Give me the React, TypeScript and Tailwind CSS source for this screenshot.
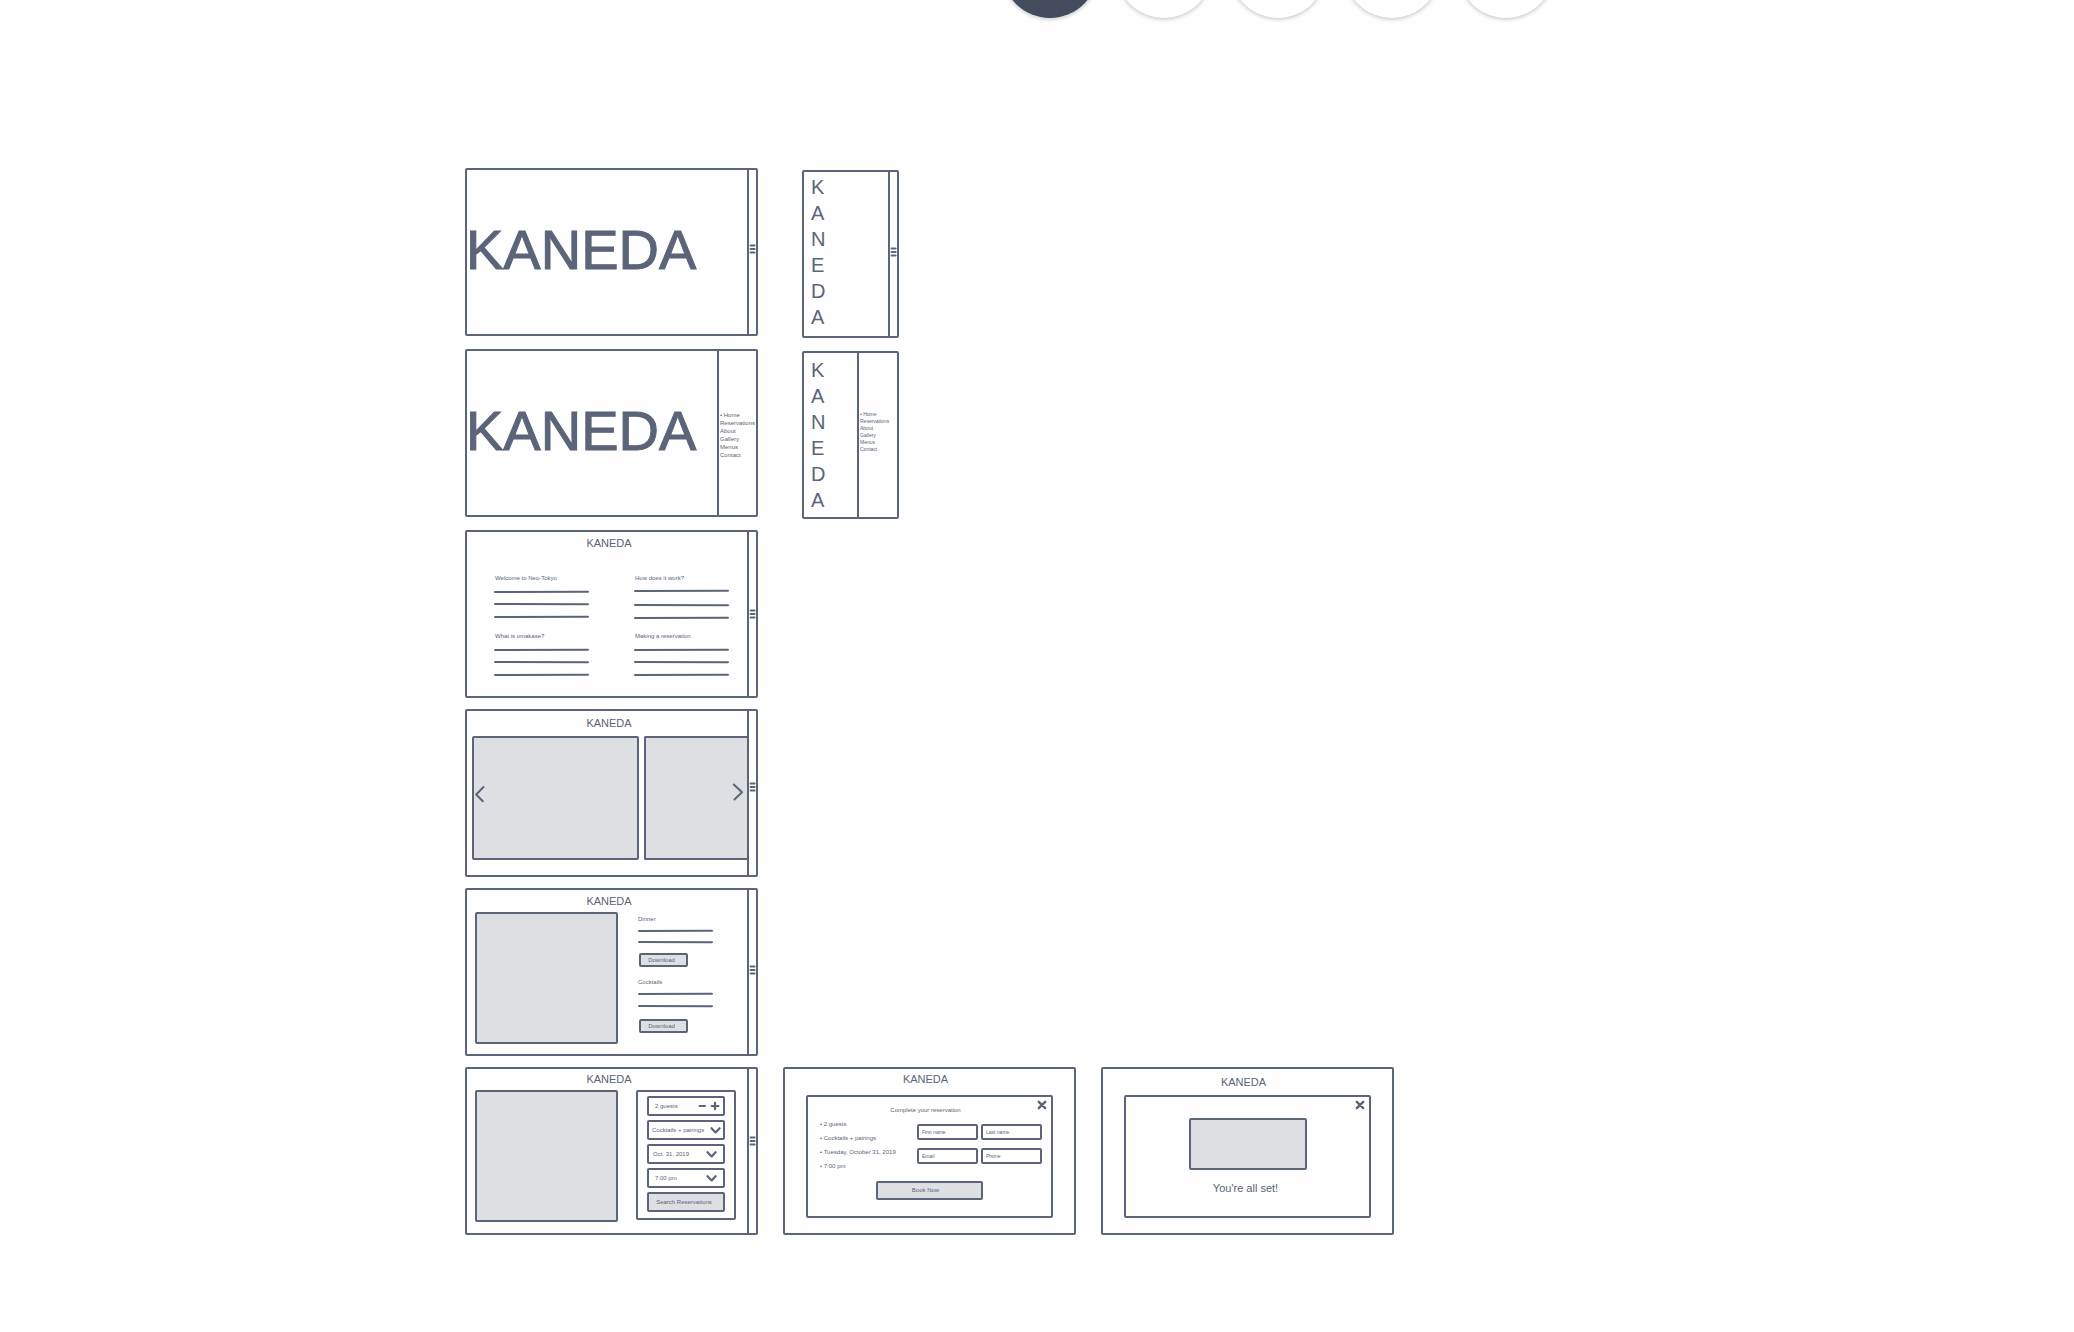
import React from 'react';
import { clsx } from 'clsx';

const menu = ['• Home', 'Reservations', 'About', 'Gallery', 'Menus', 'Contact'];

const steps = [
    { label: 'Step 1', active: true },
    { label: 'Step 2', active: false },
    { label: 'Step 3', active: false },
    { label: 'Step 4', active: false },
    { label: 'Step 5', active: false },
];

const articles = [
    { title: 'Welcome to Neo-Tokyo', lines: [9, 21, 34] },
    { title: 'How does it work?', lines: [8, 22, 35] },
    { title: 'What is omakase?', lines: [9, 21, 34] },
    { title: 'Making a reservation', lines: [9, 21, 34] },
];

const summary = ['2 guests', 'Cocktails + pairings', 'Tuesday, October 31, 2019', '7:00 pm'];

const Screen = ({ className, children }: { className?: string; children: React.ReactNode }) => (
    <section className={clsx('flex h-[168px] shrink-0 rounded-[2px] border-2 border-[#5b6478]', className ?? 'w-[293px]')}>
        {children}
    </section>
);

const Hero = ({ className }: { className: string }) => (
    <h1 className={clsx('-ml-px flex flex-1 items-center text-[56px] leading-none [-webkit-text-stroke:1px_#5b6478]', className)}>
        KANEDA
    </h1>
);

const Title = ({ className }: { className: string }) => (
    <h2 className={clsx('text-center text-[11px] leading-4', className)}>KANEDA</h2>
);

/* Collapsed menu bar with the burger in it */
const Rail = ({ className }: { className: string }) => (
    <aside className={clsx('w-[9px] shrink-0 border-l-2 border-[#5b6478]', className)}>
        <button type="button" aria-label="Open menu" className="block">
            <svg width="7" height="10" viewBox="0 0 7 10" fill="none" stroke="#5b6478" strokeWidth="2" strokeLinecap="round">
                <path d="M1.6 1.4h4M1.6 5h4M1.6 8.6h4" />
            </svg>
        </button>
    </aside>
);

/* Stand-in for a paragraph */
const Lines = ({ width, height, ys }: { width: number; height: number; ys: number[] }) => (
    <svg width={width} height={height} className="block" stroke="#5b6478" strokeWidth="2" strokeLinecap="round">
        {ys.map((y, i) => (
            <line key={y} x1={1} x2={width - 1} y1={y} y2={y + (i % 2 ? 0.2 : -0.2)} />
        ))}
    </svg>
);

const Letters = ({ className }: { className: string }) => (
    <h2 className={clsx('flex flex-1 flex-col pl-[7px] text-[20px] leading-[26px]', className)}>
        {'KANEDA'.split('').map((letter, i) => (
            <span key={i}>{letter}</span>
        ))}
    </h2>
);

const Chevron = ({ d }: { d: string }) => (
    <svg width="12" height="18" viewBox="0 0 12 18" fill="none" stroke="#5b6478" strokeWidth="2" strokeLinecap="round" strokeLinejoin="round">
        <path d={d} />
    </svg>
);

const Picker = ({ label, value, className, arrow }: { label: string; value: string; className: string; arrow: string }) => (
    <div className="relative h-5">
        <select
            aria-label={label}
            className={clsx('block h-full w-full appearance-none rounded-[2px] border-2 border-[#5b6478] bg-white', className)}
        >
            <option>{value}</option>
        </select>
        <svg
            className={clsx('pointer-events-none absolute top-[7px]', arrow)}
            width="11"
            height="7"
            viewBox="0 0 11 7"
            fill="none"
            stroke="#5b6478"
            strokeWidth="2.2"
            strokeLinecap="round"
            strokeLinejoin="round"
        >
            <path d="M1.5 1.2 5.6 5.4 9.6 1.2" />
        </svg>
    </div>
);

const Close = () => (
    <button type="button" aria-label="Close" className="absolute top-[3px] right-1">
        <svg width="10" height="10" viewBox="0 0 10 10" fill="none" stroke="#5b6478" strokeWidth="2.4" strokeLinecap="round">
            <path d="M1.8 1.8 8.2 8.2M8.2 1.8 1.8 8.2" />
        </svg>
    </button>
);

const Download = () => (
    <button type="button" className="ml-px block h-[14px] w-[49px] rounded-[2px] border-2 border-[#5b6478] bg-[#dedfe3] pr-1 leading-[10px]">
        Download
    </button>
);

const Field = ({ label }: { label: string }) => (
    <input
        aria-label={label}
        placeholder={label}
        className="h-4 w-full rounded-[2px] border-2 border-[#5b6478] bg-white px-[3px] text-[5px] leading-3 placeholder:text-[#5b6478]"
    />
);

export default function App() {
    return (
        <div className="min-h-screen bg-[#fefefe] font-['Liberation_Sans',Arial,sans-serif] text-[6px] text-[#5b6478]">
            <div className="mx-auto w-full max-w-[1144px]">
                <nav className="flex h-[18px] items-end justify-end gap-[18px] pr-[55px]">
                    {steps.map((step) => (
                        <button
                            key={step.label}
                            type="button"
                            aria-label={step.label}
                            className={clsx(
                                'size-24 shrink-0 rounded-full shadow-[0_1px_4px_rgba(0,0,0,0.25)]',
                                step.active ? 'bg-[#434c5c]' : 'bg-white',
                            )}
                        />
                    ))}
                </nav>

                <main className="flex flex-col gap-[11px] pt-[150px] pb-24">
                    {/* Landing */}
                    <div className="flex gap-11">
                        <Screen>
                            <Hero className="pb-1" />
                            <Rail className="pt-[74px]" />
                        </Screen>
                        <div className="pt-0.5">
                            <Screen className="w-[97px]">
                                <Letters className="pt-[2px]" />
                                <Rail className="pt-[75px]" />
                            </Screen>
                        </div>
                    </div>

                    {/* Landing, menu open */}
                    <div className="flex gap-11">
                        <Screen>
                            <Hero className="pb-1" />
                            <ul className="w-[39px] border-l-2 border-[#5b6478] pt-[60px] pl-px leading-2">
                                {menu.map((item) => (
                                    <li key={item}>{item}</li>
                                ))}
                            </ul>
                        </Screen>
                        <div className="pt-0.5">
                            <Screen className="w-[97px]">
                                <Letters className="pt-1" />
                                <ul className="w-10 border-l-2 border-[#5b6478] pt-[58px] pl-px text-[5px] leading-[7px]">
                                    {menu.map((item) => (
                                        <li key={item}>{item}</li>
                                    ))}
                                </ul>
                            </Screen>
                        </div>
                    </div>

                    {/* About */}
                    <Screen>
                        <div className="flex-1">
                            <Title className="pt-[3px] pl-1" />
                            <div className="grid grid-cols-[95px_95px] gap-x-[45px] pt-[22px] pl-[27px]">
                                {articles.map((article) => (
                                    <article key={article.title} className="h-[58px]">
                                        <h3 className="pl-px leading-[10px]">{article.title}</h3>
                                        <Lines width={95} height={37} ys={article.lines} />
                                    </article>
                                ))}
                            </div>
                        </div>
                        <Rail className="pt-[77px]" />
                    </Screen>

                    {/* Gallery */}
                    <Screen>
                        <div className="flex-1">
                            <Title className="pt-1 pl-1" />
                            <div className="flex h-[129px] gap-[5px] pt-[5px] pl-[5px]">
                                <div className="flex w-[167px] items-center rounded-[2px] border-2 border-[#5b6478] bg-[#dedfe3] pb-2">
                                    <button type="button" aria-label="Previous">
                                        <Chevron d="M9.5 2 2.2 9.5l6.6 6.7" />
                                    </button>
                                </div>
                                <div className="flex flex-1 items-center justify-end rounded-l-[2px] border-2 border-r-0 border-[#5b6478] bg-[#dedfe3] pr-[3px] pb-3">
                                    <button type="button" aria-label="Next">
                                        <Chevron d="M1.8 1.5 10 9.3l-7.6 7.2" />
                                    </button>
                                </div>
                            </div>
                        </div>
                        <Rail className="pt-[71px]" />
                    </Screen>

                    {/* Menus */}
                    <Screen>
                        <div className="flex-1">
                            <Title className="pt-[3px] pl-1" />
                            <div className="flex gap-5 pt-[3px] pl-2">
                                <div className="h-[132px] w-[143px] rounded-[2px] border-2 border-[#5b6478] bg-[#dedfe3]" />
                                <div className="flex flex-col pt-[2px]">
                                    <h3 className="leading-[10px]">Dinner</h3>
                                    <Lines width={75} height={29} ys={[7, 18]} />
                                    <Download />
                                    <h3 className="pt-[10px] leading-[10px]">Cocktails</h3>
                                    <Lines width={75} height={32} ys={[7, 19]} />
                                    <Download />
                                </div>
                            </div>
                        </div>
                        <Rail className="pt-[75px]" />
                    </Screen>

                    {/* Reservations */}
                    <div className="flex gap-[25px]">
                        <Screen>
                            <div className="flex-1">
                                <Title className="pt-[2px] pl-1" />
                                <div className="flex gap-[18px] pt-[3px] pl-2">
                                    <div className="h-[132px] w-[143px] rounded-[2px] border-2 border-[#5b6478] bg-[#dedfe3]" />
                                    <form className="flex h-[130px] w-[100px] flex-col gap-1 rounded-[2px] border-2 border-[#5b6478] px-[9px] pt-1">
                                        <div className="flex h-5 items-center rounded-[2px] border-2 border-[#5b6478] pr-[3px] pl-[6px]">
                                            <span className="flex-1">2 guests</span>
                                            <button type="button" aria-label="Fewer guests">
                                                <svg width="12" height="10" viewBox="0 0 12 10" stroke="#5b6478" strokeWidth="2" strokeLinecap="round">
                                                    <path d="M1.5 5h5.5" />
                                                </svg>
                                            </button>
                                            <button type="button" aria-label="More guests">
                                                <svg width="10" height="10" viewBox="0 0 10 10" stroke="#5b6478" strokeWidth="2.2" strokeLinecap="round">
                                                    <path d="M1.6 5h6.8M5 1.8v6.4" />
                                                </svg>
                                            </button>
                                        </div>
                                        <Picker label="Menu" value="Cocktails + pairings" className="pl-[3px]" arrow="right-1" />
                                        <Picker label="Date" value="Oct. 31, 2019" className="pl-1" arrow="right-2" />
                                        <Picker label="Time" value="7:00 pm" className="pl-[6px]" arrow="right-2" />
                                        <button type="button" className="h-5 rounded-[2px] border-2 border-[#5b6478] bg-[#dedfe3] pr-1">
                                            Search Reservations
                                        </button>
                                    </form>
                                </div>
                            </div>
                            <Rail className="pt-[67px]" />
                        </Screen>

                        <Screen>
                            <div className="flex-1">
                                <Title className="pt-[2px] pr-2" />
                                <form className="relative mx-[21px] mt-2 h-[123px] rounded-[2px] border-2 border-[#5b6478]">
                                    <Close />
                                    <h3 className="pt-2 pr-2 text-center leading-[10px]">Complete your reservation</h3>
                                    <div className="flex">
                                        <ul className="w-[109px] pt-[2px] pl-3 leading-[14px]">
                                            {summary.map((item) => (
                                                <li key={item}>• {item}</li>
                                            ))}
                                        </ul>
                                        <div className="grid grid-cols-[61px_61px] content-start gap-x-[3px] gap-y-2 pt-[9px]">
                                            <Field label="First name" />
                                            <Field label="Last name" />
                                            <Field label="Email" />
                                            <Field label="Phone" />
                                        </div>
                                    </div>
                                    <button type="button" className="mx-auto mt-2 block h-[19px] w-[107px] rounded-[2px] border-2 border-[#5b6478] bg-[#dedfe3] pr-2">
                                        Book Now
                                    </button>
                                </form>
                            </div>
                        </Screen>

                        <Screen>
                            <div className="flex-1">
                                <Title className="pt-[5px] pr-2" />
                                <div className="relative mx-[21px] mt-[5px] h-[123px] rounded-[2px] border-2 border-[#5b6478] pt-[21px]">
                                    <Close />
                                    <div className="mx-auto h-[52px] w-[118px] rounded-[2px] border-2 border-[#5b6478] bg-[#dedfe3]" />
                                    <p className="pt-[10px] pr-1 text-center text-[11px] leading-4">You're all set!</p>
                                </div>
                            </div>
                        </Screen>
                    </div>
                </main>
            </div>
        </div>
    );
}
